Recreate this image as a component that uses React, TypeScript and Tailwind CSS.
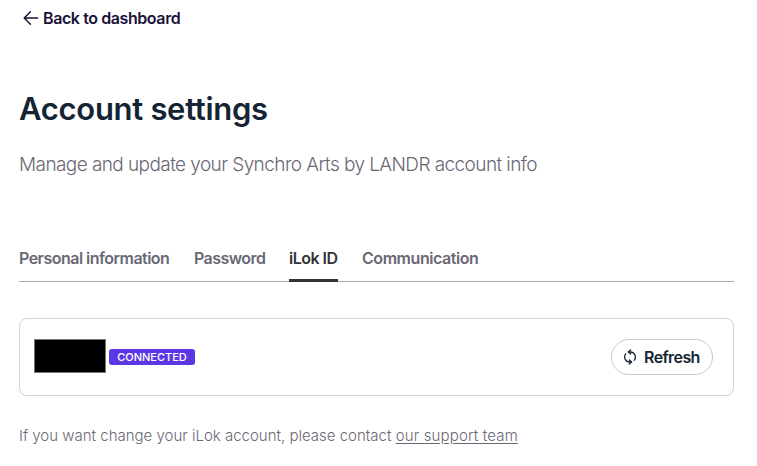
const tabs = [
  { label: "Personal information", className: "w-[151px] tracking-[-0.52px]" },
  { label: "Password", className: "w-[71px] tracking-[-0.56px]" },
  { label: "iLok ID", className: "w-[49px] tracking-[-0.5px]", active: true },
  { label: "Communication", className: "w-[117px] tracking-[-0.44px]" },
];

function BackArrow() {
  return (
    <svg width="16" height="16" viewBox="0 0 16 16" fill="none" stroke="currentColor" strokeWidth="1.4" strokeLinecap="round" strokeLinejoin="round">
      <path d="M14.6 8H1.4M7.4 1.7 1.2 8l6.2 6.3" />
    </svg>
  );
}

function RefreshIcon() {
  return (
    <svg width="14" height="16" viewBox="0 0 14 16" fill="none" stroke="currentColor" strokeWidth="1.3" strokeLinecap="round" strokeLinejoin="round">
      <path d="M5.4 3H7.2A5.1 5.1 0 0 1 11.3 11.2M8.6 13H6.8A5.1 5.1 0 0 1 2.7 4.8" />
      <path d="M7.7 1 5.4 3l2.3 2M6.3 15l2.3-2-2.3-2" />
    </svg>
  );
}

export default function App() {
  return (
    <main className="h-[466px] overflow-hidden bg-white pl-[19px] pr-[23px] font-['Inter',sans-serif] text-[#6a6875]">
      <a href="#" className="flex h-9 items-center gap-1 pl-1 text-[#1b1238]">
        <BackArrow />
        <span className="whitespace-nowrap text-base font-semibold tracking-[-0.41px]">Back to dashboard</span>
      </a>

      <h1 className="mt-[53px] whitespace-nowrap text-[31px] leading-10 font-semibold tracking-[-0.3px] text-[#142434]">
        Account settings
      </h1>
      <p className="mt-[22px] whitespace-nowrap text-[19px] leading-7 font-light tracking-[-0.58px]">
        Manage and update your Synchro Arts by LANDR account info
      </p>

      <nav className="mt-14 flex h-[47px] gap-6 border-b border-[#a9a8ae]">
        {tabs.map((tab) => (
          <a
            key={tab.label}
            href="#"
            className={`h-[47px] whitespace-nowrap pt-[11px] text-base font-semibold ${tab.className} ${
              tab.active ? "border-b-[3px] border-[#333336] text-[#333336]" : ""
            }`}
          >
            {tab.label}
          </a>
        ))}
      </nav>

      <section className="mt-9 flex h-[78px] items-center rounded-lg border border-[#d3d3d6] pl-[14px] pr-5">
        <div className="mb-0.5 h-[34px] w-[72px] border border-[#777] bg-black" />
        <span className="ml-[3px] flex h-4 w-[86px] items-center justify-center rounded-[3px] bg-[#5c37e6] text-[11px] font-medium text-white">
          CONNECTED
        </span>
        <button className="ml-auto flex h-9 w-[102px] items-center rounded-full border border-[#c9c7d2] pl-[11px] text-[#142434]">
          <RefreshIcon />
          <span className="ml-[7px] text-base font-semibold tracking-[-0.6px]">Refresh</span>
        </button>
      </section>

      <p className="mt-7 whitespace-nowrap text-[15px] leading-6 font-light">
        If you want change your iLok account, please contact{" "}
        <a href="#" className="tracking-[0.16px] underline underline-offset-2">our support team</a>
      </p>
    </main>
  );
}
